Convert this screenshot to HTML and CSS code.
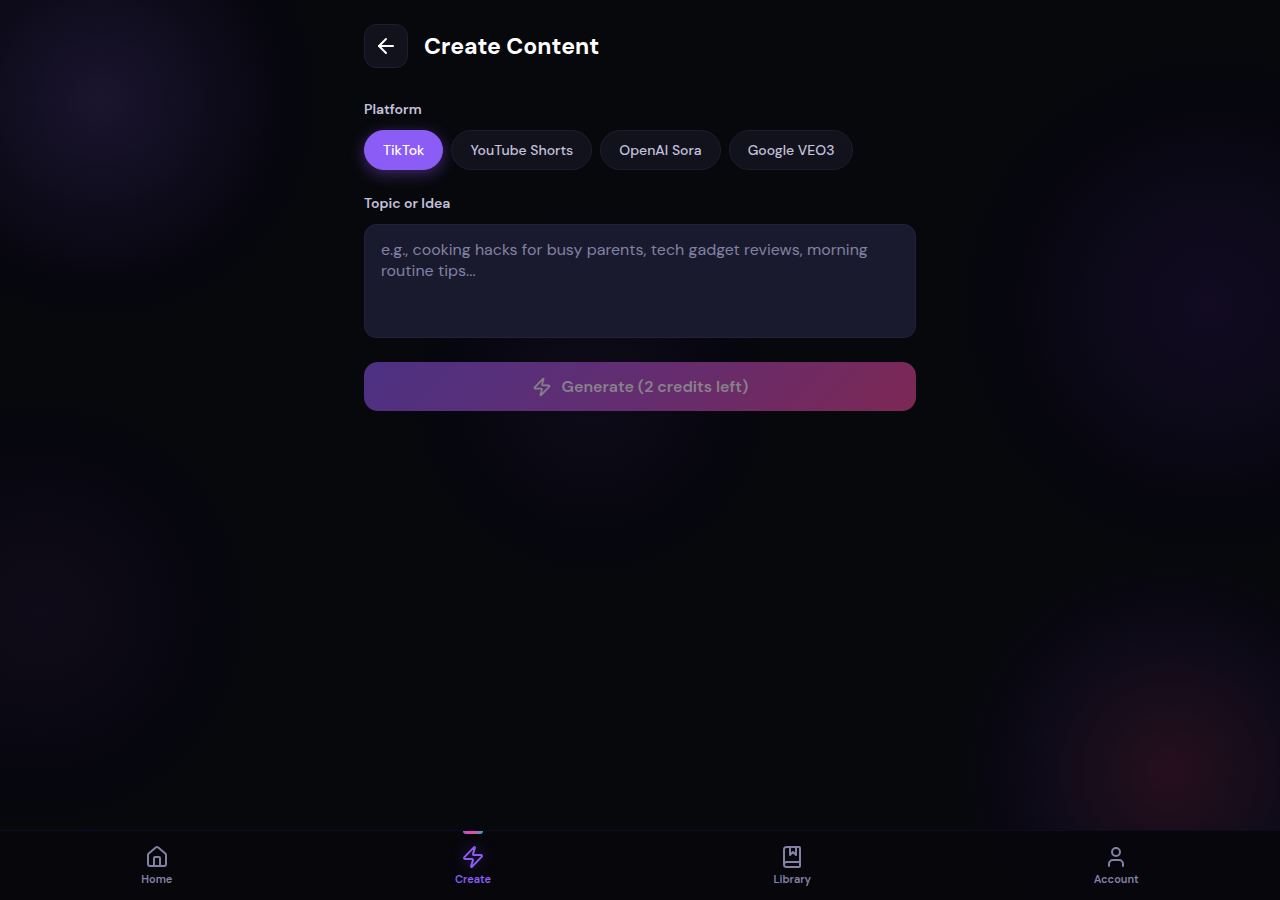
FILE: index.html
```html
<!DOCTYPE html>
<html lang="en">
<head>
<meta charset="UTF-8" />
<meta name="viewport" content="width=device-width, initial-scale=1" />
<title>Create Content</title>
<link rel="stylesheet" href="styles.css">
</head>
<body>
  <main class="page">
    <header class="page-header">
      <button class="back-btn" type="button" aria-label="Go back">
        <svg class="icon" width="24" height="24" viewBox="0 0 24 24" aria-hidden="true">
          <path d="M19 12H5"/>
          <path d="M12 19l-7-7 7-7"/>
        </svg>
      </button>
      <h1>Create Content</h1>
    </header>

    <form class="create-form" id="create-form">
      <div class="field">
        <span class="label" id="platform-label">Platform</span>
        <div class="chips" role="group" aria-labelledby="platform-label">
          <button type="button" class="chip active" aria-pressed="true">TikTok</button>
          <button type="button" class="chip" aria-pressed="false">YouTube Shorts</button>
          <button type="button" class="chip" aria-pressed="false">OpenAI Sora</button>
          <button type="button" class="chip" aria-pressed="false">Google VEO3</button>
        </div>
      </div>

      <div class="field">
        <label class="label" for="topic">Topic or Idea</label>
        <textarea id="topic" class="topic" placeholder="e.g., cooking hacks for busy parents, tech gadget reviews, morning routine tips..."></textarea>
      </div>

      <button class="generate-btn" id="generate" type="submit" disabled>
        <svg class="icon" width="20" height="20" viewBox="0 0 24 24" aria-hidden="true">
          <path d="M4 14a1 1 0 0 1-.78-1.63l9.9-10.2a.5.5 0 0 1 .86.46l-1.92 6.02A1 1 0 0 0 13 10h7a1 1 0 0 1 .78 1.63l-9.9 10.2a.5.5 0 0 1-.86-.46l1.92-6.02A1 1 0 0 0 11 14z"/>
        </svg>
        Generate (2 credits left)
      </button>
    </form>
  </main>

  <nav class="bottom-nav" aria-label="Main">
    <a href="#home" class="nav-item">
      <svg class="icon" width="24" height="24" viewBox="0 0 24 24" aria-hidden="true">
        <path d="M15 21v-8a1 1 0 0 0-1-1h-4a1 1 0 0 0-1 1v8"/>
        <path d="M3 10a2 2 0 0 1 .709-1.528l7-6a2 2 0 0 1 2.582 0l7 6A2 2 0 0 1 21 10v9a2 2 0 0 1-2 2H5a2 2 0 0 1-2-2z"/>
      </svg>
      <span>Home</span>
    </a>
    <a href="#create" class="nav-item active" aria-current="page">
      <svg class="icon" width="24" height="24" viewBox="0 0 24 24" aria-hidden="true">
        <path d="M4 14a1 1 0 0 1-.78-1.63l9.9-10.2a.5.5 0 0 1 .86.46l-1.92 6.02A1 1 0 0 0 13 10h7a1 1 0 0 1 .78 1.63l-9.9 10.2a.5.5 0 0 1-.86-.46l1.92-6.02A1 1 0 0 0 11 14z"/>
      </svg>
      <span>Create</span>
    </a>
    <a href="#library" class="nav-item">
      <svg class="icon" width="24" height="24" viewBox="0 0 24 24" aria-hidden="true">
        <path d="M10 2v8l3-3 3 3V2"/>
        <path d="M4 19.500v-15A2.500 2.500 0 0 1 6.500 2H19a1 1 0 0 1 1 1v18a1 1 0 0 1-1 1H6.500a1 1 0 0 1 0-5H20"/>
      </svg>
      <span>Library</span>
    </a>
    <a href="#account" class="nav-item">
      <svg class="icon" width="24" height="24" viewBox="0 0 24 24" aria-hidden="true">
        <path d="M19 21v-2a4 4 0 0 0-4-4H9a4 4 0 0 0-4 4v2"/>
        <circle cx="12" cy="7" r="4"/>
      </svg>
      <span>Account</span>
    </a>
  </nav>

  <script>
    const chips = document.querySelectorAll('.chip');
    const topic = document.getElementById('topic');
    const generate = document.getElementById('generate');

    chips.forEach(chip => {
      chip.addEventListener('click', () => {
        chips.forEach(c => {
          c.classList.toggle('active', c === chip);
          c.setAttribute('aria-pressed', c === chip);
        });
      });
    });

    topic.addEventListener('input', () => {
      generate.disabled = topic.value.trim() === '';
    });

    document.getElementById('create-form').addEventListener('submit', e => {
      e.preventDefault();
    });
  </script>
</body>
</html>
```
FILE: styles.css
```css
* {
  box-sizing: border-box;
}
body {
  margin: 0;
  min-height: 100vh;
  display: flex;
  flex-direction: column;
  font-family: "DM Sans", Inter, sans-serif;
  color: #fff;
  /* soft glows behind the page */
  background:
    radial-gradient(circle at 100px 100px, #1b142e 0, #110e20 90px, #090813 160px, #06060e 195px, transparent 225px),
    radial-gradient(circle at 1210px 305px, #120b22 0, #0c0919 110px, #080711 180px, #06060e 215px, transparent 255px),
    radial-gradient(circle at 1170px 770px, #260f1e 0, #190d1b 70px, #0f0b19 125px, #090712 175px, transparent 210px),
    radial-gradient(circle at 40px 612px, #100b18 0, #0a0813 110px, #06060e 180px, transparent 215px),
    radial-gradient(circle at 592px 395px, #0e0b18 0, #090812 100px, #06060e 150px, transparent 185px),
    #07080c;
}
.page {
  flex: 1;
  width: 100%;
  max-width: 600px;
  margin: 0 auto;
  padding: 24px;
}
.page-header {
  display: flex;
  align-items: center;
  gap: 16px;
  margin-bottom: 32px;
}
h1 {
  margin: 0;
  font-size: 23px;
  font-weight: 700;
  line-height: 32px;
}
.icon {
  flex: none;
  fill: none;
  stroke: currentColor;
  stroke-width: 2;
  stroke-linecap: round;
  stroke-linejoin: round;
}
.back-btn {
  width: 44px;
  height: 44px;
  padding: 0;
  display: flex;
  align-items: center;
  justify-content: center;
  background: #12121d;
  border: 1px solid #1e1c30;
  border-radius: 12px;
  color: #fff;
  cursor: pointer;
}
.create-form {
  display: flex;
  flex-direction: column;
  gap: 24px;
}
.field {
  display: flex;
  flex-direction: column;
  gap: 12px;
}
.label {
  font-size: 14px;
  font-weight: 600;
  line-height: 18px;
  color: #c4c1dc;
}
.chips {
  display: flex;
  flex-wrap: wrap;
  gap: 8px;
}
.chip {
  height: 40px;
  padding: 0 18px;
  font-family: inherit;
  font-size: 14px;
  font-weight: 500;
  color: #c4c1dc;
  background: #12121d;
  border: 1px solid #1e1c30;
  border-radius: 20px;
  cursor: pointer;
}
.chip.active {
  color: #fff;
  background: #8b5cf6;
  border-color: #8b5cf6;
  box-shadow: 0 4px 16px rgba(139, 92, 246, 0.4);
}
.topic {
  display: block;
  width: 100%;
  height: 114px;
  padding: 14px 16px;
  font-family: inherit;
  font-size: 16px;
  line-height: 21px;
  color: #fff;
  background: #1a1a2e;
  border: 1px solid #22203a;
  border-radius: 12px;
  resize: none;
}
.topic::placeholder {
  color: #8381a5;
}
.topic:focus {
  outline: none;
  border-color: #8b5cf6;
}
.generate-btn {
  display: flex;
  align-items: center;
  justify-content: center;
  gap: 10px;
  height: 49px;
  padding: 0 24px;
  font-family: inherit;
  font-size: 16px;
  font-weight: 600;
  color: #fff;
  background: linear-gradient(135deg, #8b5cf6, #ec4899);
  border: none;
  border-radius: 14px;
  cursor: pointer;
}
.generate-btn:disabled {
  color: #87828a;
  background: linear-gradient(135deg, #4c3183, #632d70 50%, #7d2854);
  cursor: not-allowed;
}
.bottom-nav {
  position: sticky;
  bottom: 0;
  display: flex;
  justify-content: space-around;
  height: 70px;
  background: rgba(6, 6, 12, 0.94);
  border-top: 1px solid #0e0b20;
}
.nav-item {
  position: relative;
  display: flex;
  flex-direction: column;
  align-items: center;
  gap: 3px;
  padding: 14px 16px 0;
  font-size: 11px;
  font-weight: 600;
  line-height: 15px;
  color: #8381a5;
  text-decoration: none;
}
.nav-item.active {
  color: #8b5cf6;
}
.nav-item.active .icon {
  filter: drop-shadow(0 0 8px rgba(139, 92, 246, 0.4));
}
.nav-item.active::before {
  content: "";
  position: absolute;
  top: 0;
  left: 50%;
  width: 20px;
  height: 3px;
  transform: translateX(-50%);
  background: linear-gradient(90deg, #b455d8, #ec4899 50%, #2fa8cc);
  border-radius: 0 0 3px 3px;
}
```
